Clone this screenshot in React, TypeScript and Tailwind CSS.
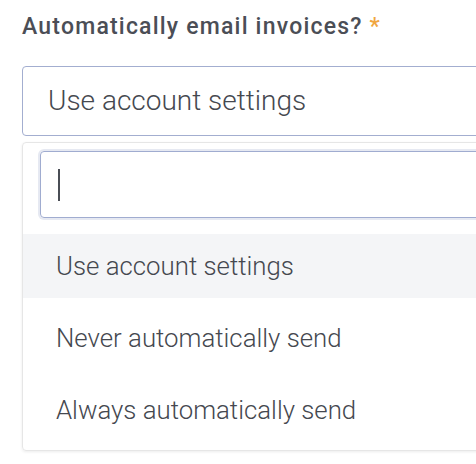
import React from "react";

export default function App() {
  const font = { fontFamily: "Roboto, 'Noto Sans', sans-serif" };
  return (
    <div className="w-[476px] h-[464px] overflow-hidden bg-white pl-[22px] pt-[13px]" style={font}>
      <div className="text-[23px] leading-[28px] font-medium tracking-[1.2px] text-[#4b4e56] whitespace-nowrap">
        Automatically email invoices? <span className="text-[#f0a640]">*</span>
      </div>
      <div className="mt-[25px] w-[520px] h-[70px] border border-[#a3aed0] rounded-[4px] flex items-center pl-[25px] text-[28px] font-light text-[#45484f] whitespace-nowrap">
        Use account settings
      </div>
      <div className="mt-[6px] w-[520px] h-[309px] border border-[#e6e6e6] rounded-[4px] shadow-[0_1px_3px_rgba(0,0,0,0.08)] pt-[8px] pb-[8px]">
        <div className="ml-[17px] w-[500px] h-[67px] border border-[#a0acd0] rounded-[4px] ring-2 ring-[#e6e9f2] flex items-center pl-[17px]">
          <div className="w-[2px] h-[32px] bg-[#4a4d55]" />
        </div>
        <div className="mt-[16px] flex flex-col gap-[8px] text-[25.8px] font-light text-[#45484f] whitespace-nowrap">
          <div className="h-[64px] bg-[#f4f5f7] flex items-center pl-[33px]">Use account settings</div>
          <div className="h-[64px] flex items-center pl-[33px]">Never automatically send</div>
          <div className="h-[64px] flex items-center pl-[33px]">Always automatically send</div>
        </div>
      </div>
    </div>
  );
}
